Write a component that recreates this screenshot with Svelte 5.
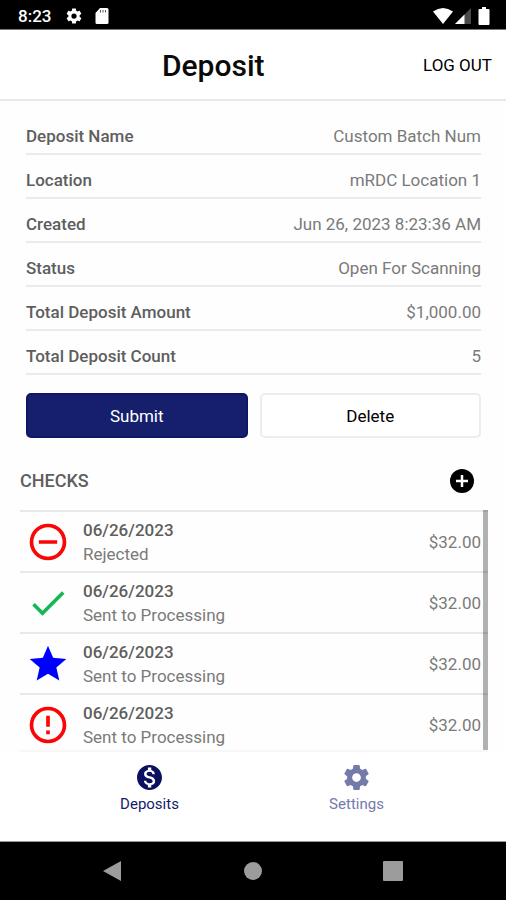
<script>
  const details = [
    { label: 'Deposit Name', value: 'Custom Batch Num' },
    { label: 'Location', value: 'mRDC Location 1' },
    { label: 'Created', value: 'Jun 26, 2023 8:23:36 AM' },
    { label: 'Status', value: 'Open For Scanning' },
    { label: 'Total Deposit Amount', value: '$1,000.00' },
    { label: 'Total Deposit Count', value: '5' }
  ];

  const checks = [
    { icon: 'minus', date: '06/26/2023', status: 'Rejected', amount: '$32.00' },
    { icon: 'check', date: '06/26/2023', status: 'Sent to Processing', amount: '$32.00' },
    { icon: 'star', date: '06/26/2023', status: 'Sent to Processing', amount: '$32.00' },
    { icon: 'alert', date: '06/26/2023', status: 'Sent to Processing', amount: '$32.00' }
  ];

  const icons = {
    minus: { color: '#fb0505', path: 'M12 20c-4.41 0-8-3.59-8-8s3.59-8 8-8 8 3.59 8 8-3.59 8-8 8m0-18A10 10 0 0 0 2 12a10 10 0 0 0 10 10 10 10 0 0 0 10-10A10 10 0 0 0 12 2M7 13h10v-2H7' },
    check: { color: '#12b853', path: 'M9 16.17L4.83 12l-1.42 1.41L9 19 21 7l-1.41-1.41z' },
    star: { color: '#0000ff', path: 'M12 17.27 18.18 21l-1.64-7.03L22 9.24l-7.19-.62L12 2 9.19 8.62 2 9.24l5.45 4.73L5.82 21z' },
    alert: { color: '#fb0505', path: 'M11 15h2v2h-2zm0-8h2v6h-2zm1-5a10 10 0 1 0 0 20 10 10 0 0 0 0-20zm0 18a8 8 0 1 1 0-16 8 8 0 0 1 0 16z' }
  };

  const gear = 'M12 15.5A3.5 3.5 0 0 1 8.5 12 3.5 3.5 0 0 1 12 8.5a3.5 3.5 0 0 1 3.5 3.5 3.5 3.5 0 0 1-3.5 3.5m7.43-2.53c.04-.32.07-.64.07-.97 0-.33-.03-.66-.07-1l2.11-1.63c.19-.15.24-.42.12-.64l-2-3.46c-.12-.22-.39-.31-.61-.22l-2.49 1c-.52-.39-1.06-.73-1.69-.98l-.37-2.65A.506.506 0 0 0 14 2h-4c-.25 0-.46.18-.5.42l-.37 2.65c-.63.25-1.17.59-1.69.98l-2.49-1c-.22-.09-.49 0-.61.22l-2 3.46c-.13.22-.07.49.12.64L4.57 11c-.04.34-.07.67-.07 1 0 .33.03.65.07.97l-2.11 1.66c-.19.15-.25.42-.12.64l2 3.46c.12.22.39.3.61.22l2.49-1.01c.52.4 1.06.74 1.69.99l.37 2.65c.04.24.25.42.5.42h4c.25 0 .46-.18.5-.42l.37-2.65c.63-.26 1.17-.59 1.69-.99l2.49 1.01c.22.08.49 0 .61-.22l2-3.46c.12-.22.07-.49-.12-.64z';
</script>

<div class="screen">
  <div class="status-bar">
    <span class="clock">8:23</span>
    <svg class="gear" viewBox="0 0 24 24" aria-hidden="true"><path d={gear} /></svg>
    <svg class="card" viewBox="0 0 14 16" aria-hidden="true">
      <path d="M5 0h7a1.5 1.5 0 0 1 1.5 1.5v13A1.5 1.5 0 0 1 12 16H2a1.5 1.5 0 0 1-1.5-1.500V5z" />
      <path d="M5.500 2v2.500M8 2v2.500M10.500 2v2.500" stroke="#555" fill="none" />
    </svg>
    <span class="spacer"></span>
    <svg class="wifi" viewBox="0 0 20 16" aria-hidden="true"><path d="M10 16 0 3.500Q10-3.500 20 3.500z" /></svg>
    <svg class="signal" viewBox="0 0 16 16" aria-hidden="true">
      <path d="M16 0v16H0z" fill="#4a4a4a" /><path d="M9.500 6.500V16H0z" />
    </svg>
    <svg class="battery" viewBox="0 0 12 18" aria-hidden="true"><path d="M4 0h4v2h2.500a1 1 0 0 1 1 1v14a1 1 0 0 1-1 1h-9a1 1 0 0 1-1-1V3a1 1 0 0 1 1-1H4z" /></svg>
  </div>

  <header>
    <h1>Deposit</h1>
    <button class="logout" type="button">LOG OUT</button>
  </header>

  <main>
    <dl>
      {#each details as row}
        <div class="detail">
          <dt>{row.label}</dt>
          <dd>{row.value}</dd>
        </div>
      {/each}
    </dl>

    <div class="actions">
      <button class="action primary" type="button">Submit</button>
      <button class="action" type="button">Delete</button>
    </div>

    <div class="section-head">
      <h2>CHECKS</h2>
      <button class="add" type="button" aria-label="Add check">
        <svg viewBox="0 0 24 24" aria-hidden="true"><circle cx="12" cy="12" r="12" fill="#000" /><path d="M6 12h12M12 6v12" stroke="#fff" stroke-width="2.500" /></svg>
      </button>
    </div>

    <div class="list-frame">
      <ul>
        {#each checks as item}
          <li>
            <svg class="state" viewBox="0 0 24 24" fill={icons[item.icon].color} aria-hidden="true"><path d={icons[item.icon].path} /></svg>
            <div class="info">
              <strong>{item.date}</strong>
              <span>{item.status}</span>
            </div>
            <span class="amount">{item.amount}</span>
          </li>
        {/each}
      </ul>
      <div class="thumb"></div>
    </div>
  </main>

  <nav class="tabs">
    <a class="tab active" href="#deposits">
      <svg viewBox="2 2 20 20" aria-hidden="true"><path d="M12 2C6.480 2 2 6.480 2 12s4.480 10 10 10 10-4.480 10-10S17.520 2 12 2zm1.410 16.090V20h-2.670v-1.930c-1.710-.36-3.160-1.460-3.270-3.400h1.960c.1 1.050.82 1.870 2.650 1.870 1.960 0 2.400-.98 2.400-1.590 0-.83-.44-1.610-2.670-2.140-2.480-.6-4.180-1.620-4.180-3.670 0-1.720 1.390-2.840 3.110-3.210V4h2.670v1.950c1.860.45 2.790 1.860 2.850 3.390H14.300c-.05-1.110-.64-1.870-2.220-1.870-1.500 0-2.400.68-2.400 1.640 0 .84.65 1.390 2.670 1.910s4.180 1.390 4.180 3.910c-.01 1.830-1.380 2.830-3.120 3.160z" /></svg>
      <span>Deposits</span>
    </a>
    <a class="tab" href="#settings">
      <svg viewBox="2 2 20 20" aria-hidden="true"><path d={gear} /></svg>
      <span>Settings</span>
    </a>
  </nav>

  <div class="system-nav">
    <button type="button" aria-label="Back"><svg viewBox="0 0 20 20" aria-hidden="true"><path d="M18 0v20L0 10z" /></svg></button>
    <button type="button" aria-label="Home"><svg viewBox="0 0 20 20" aria-hidden="true"><circle cx="10" cy="10" r="9" /></svg></button>
    <button type="button" aria-label="Overview"><svg viewBox="0 0 20 20" aria-hidden="true"><rect width="20" height="20" rx="1" /></svg></button>
  </div>
</div>

<style>
  :global(body) {
    margin: 0;
  }
  .screen {
    display: flex;
    flex-direction: column;
    height: 100vh;
    background: #fefefe;
    color: #5e5e5e;
    font-family: Roboto, sans-serif;
    font-size: 17px;
    line-height: 24px;
  }
  svg {
    display: block;
    flex: none;
  }
  button {
    margin: 0;
    padding: 0;
    border: 0;
    background: none;
    color: #000;
    font: inherit;
    cursor: pointer;
  }
  h1,
  h2,
  dl,
  dd,
  ul {
    margin: 0;
    padding: 0;
  }

  .status-bar {
    display: flex;
    align-items: center;
    box-sizing: border-box;
    height: 30px;
    padding: 2px 16px 0 18px;
    border-bottom: 1px solid #777;
    background: #000;
    color: #fff;
    fill: #fff;
  }
  .clock {
    font-weight: 500;
  }
  .gear {
    width: 18px;
    height: 18px;
    margin: 0 12px 0 14px;
  }
  .card {
    width: 14px;
    height: 16px;
  }
  .spacer {
    flex: 1;
  }
  .wifi {
    width: 20px;
    height: 16px;
  }
  .signal {
    width: 16px;
    height: 16px;
    margin: 0 7px 0 2px;
  }
  .battery {
    width: 12px;
    height: 18px;
  }

  header {
    display: flex;
    align-items: center;
    justify-content: space-between;
    height: 69px;
    padding: 2px 14px 0 32%;
    box-sizing: border-box;
    border-bottom: 2px solid #e8e8e8;
    height: 71px;
    background: #fff;
  }
  h1 {
    color: #0a0a0a;
    font-size: 30px;
    font-weight: 500;
    line-height: 36px;
  }
  .logout {
    padding-bottom: 2px;
  }

  main {
    display: flex;
    flex: 1;
    flex-direction: column;
    min-height: 0;
  }
  dl {
    padding: 10px 25px 0 26px;
  }
  .detail {
    display: flex;
    align-items: flex-end;
    justify-content: space-between;
    box-sizing: border-box;
    height: 44px;
    padding-bottom: 5px;
    border-bottom: 2px solid #ebebeb;
  }
  dt {
    font-weight: 500;
  }
  dd {
    color: #7a7a7a;
  }

  .actions {
    display: flex;
    gap: 12px;
    padding: 18px 25px 0 26px;
  }
  .action {
    flex: 1;
    box-sizing: border-box;
    height: 45px;
    border: 2px solid #ededed;
    border-radius: 5px;
    background: #fff;
  }
  .primary {
    border-color: #0f1663;
    background: #151f6b;
    color: #fff;
  }

  .section-head {
    display: flex;
    align-items: center;
    justify-content: space-between;
    box-sizing: border-box;
    height: 72px;
    padding: 14px 32px 0 20px;
  }
  h2 {
    font-size: 18px;
    font-weight: 500;
  }
  .add svg {
    width: 24px;
    height: 24px;
  }

  .list-frame {
    position: relative;
    flex: 1;
    min-height: 0;
    margin: 0 18px 0 20px;
    border-bottom: 2px solid #f7f7f7;
  }
  ul {
    height: 100%;
    overflow-y: auto;
    scrollbar-width: none;
    list-style: none;
  }
  li {
    display: flex;
    align-items: center;
    box-sizing: border-box;
    height: 61px;
    padding: 0 7px 0 6px;
    border-top: 2px solid #e8e8e8;
  }
  .state {
    width: 44px;
    height: 44px;
  }
  .info {
    display: flex;
    flex: 1;
    flex-direction: column;
    padding-left: 13px;
  }
  .info strong {
    font-weight: 500;
  }
  .info span,
  .amount {
    color: #7a7a7a;
  }
  .thumb {
    position: absolute;
    top: 0;
    right: 0;
    bottom: 0;
    width: 5px;
    background: rgba(0, 0, 0, 0.3);
  }

  .tabs {
    display: flex;
    box-sizing: border-box;
    height: 90px;
    padding: 0 46px;
    border-bottom: 1px solid #999;
    background: #fff;
  }
  .tab {
    display: flex;
    flex: 1;
    flex-direction: column;
    align-items: center;
    gap: 2px;
    padding-top: 13px;
    color: #747aaa;
    fill: #747aaa;
    font-size: 15px;
    text-decoration: none;
  }
  .tab svg {
    width: 25px;
    height: 25px;
  }
  .active {
    color: #151b68;
    fill: #0b1060;
  }

  .system-nav {
    display: flex;
    height: 58px;
    padding: 0 43px;
    background: #000;
    fill: #9c9c9c;
  }
  .system-nav button {
    display: flex;
    flex: 1;
    align-items: center;
    justify-content: center;
  }
  .system-nav svg {
    width: 20px;
    height: 20px;
  }
</style>
